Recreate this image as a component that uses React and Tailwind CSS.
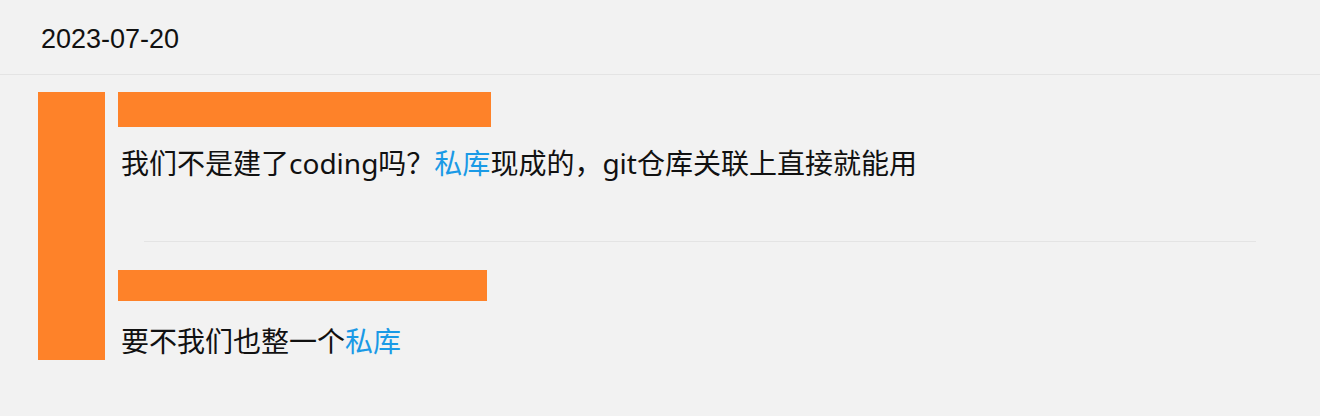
export default function App() {
  const font = { fontFamily: '"Liberation Sans", "Noto Sans CJK SC", sans-serif' };
  const body = { fontFamily: '"Noto Sans", "Noto Sans CJK SC", sans-serif' };
  return (
    <div className="w-[1320px] h-[416px] bg-[#f2f2f2] text-[#111]" style={font}>
      <div className="h-[75px] border-b border-[#e4e4e4] flex items-center pl-[41px] pt-[4px]">
        <span className="text-[27px] leading-none">2023-07-20</span>
      </div>
      <div className="flex pl-[38px] pt-[17px] pr-[64px]">
        <div className="w-[67px] h-[268px] bg-[#fe8229] shrink-0" />
        <div className="flex-1 flex flex-col pl-[13px]" style={body}>
          <div className="w-[373px] h-[35px] bg-[#fe8229]" />
          <div className="mt-[16px] h-[40px] leading-[40px] text-[28px] pl-[3px]">
            我们不是建了coding吗？<span className="text-[#1a9ae6]">私库</span>现成的，git仓库关联上直接就能用
          </div>
          <div className="mt-[58px] ml-[26px] h-px bg-[#e4e4e4]" />
          <div className="mt-[28px] w-[369px] h-[31px] bg-[#fe8229]" />
          <div className="mt-[20px] h-[40px] leading-[40px] text-[28px] pl-[3px]">
            要不我们也整一个<span className="text-[#1a9ae6]">私库</span>
          </div>
        </div>
      </div>
    </div>
  );
}
